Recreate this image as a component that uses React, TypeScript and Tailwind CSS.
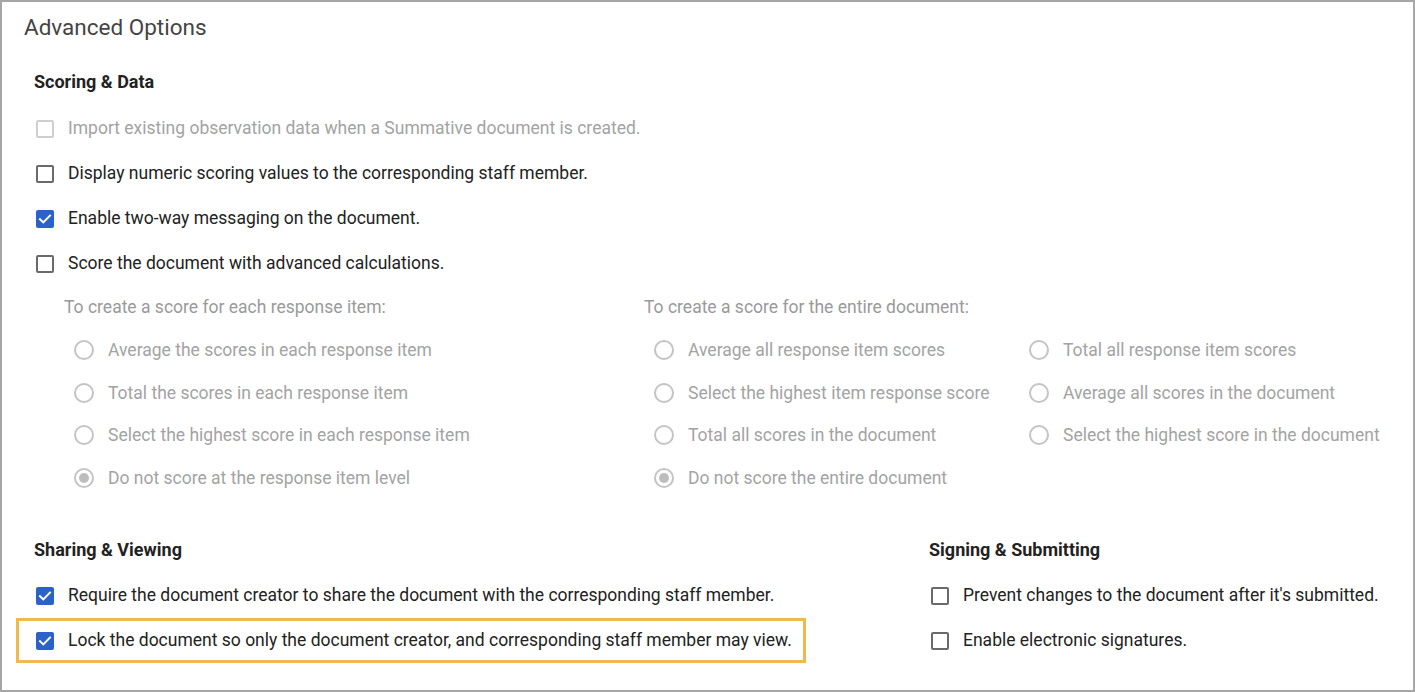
import type { ReactNode } from "react";

const font = { fontFamily: "Roboto, 'Noto Sans', sans-serif" };

function Checkbox({ checked = false, disabled = false }: { checked?: boolean; disabled?: boolean }) {
  if (checked) {
    return (
      <span className="flex h-[18px] w-[18px] shrink-0 items-center justify-center rounded-[2px] bg-[#2b62c8]">
        <svg viewBox="0 0 18 18" className="h-[18px] w-[18px]" fill="none">
          <path d="M4 9.2l3.3 3.2L14 5.6" stroke="white" strokeWidth="2" strokeLinecap="square" />
        </svg>
      </span>
    );
  }
  return (
    <span
      className={
        disabled
          ? "h-[18px] w-[18px] shrink-0 rounded-[2px] border-2 border-[#cfcfcf]"
          : "h-[18px] w-[18px] shrink-0 rounded-[2px] border-2 border-[#6a6a6a]"
      }
    />
  );
}

function CheckRow({ checked, disabled, children }: { checked?: boolean; disabled?: boolean; children: ReactNode }) {
  return (
    <div className="flex h-[45px] items-center gap-[14px]">
      <Checkbox checked={checked} disabled={disabled} />
      <span className={disabled ? "text-[17.5px] text-[#a3a3a3]" : "text-[17.5px] text-[#222222]"}>{children}</span>
    </div>
  );
}

function Radio({ selected = false, children }: { selected?: boolean; children: ReactNode }) {
  return (
    <div className="flex h-[42.5px] items-center gap-[14px]">
      <span className="flex h-[20px] w-[20px] shrink-0 items-center justify-center rounded-full border-2 border-[#c4c4c4]">
        {selected && <span className="h-[10px] w-[10px] rounded-full bg-[#bdbdbd]" />}
      </span>
      <span className="whitespace-nowrap text-[17.5px] text-[#a3a3a3]">{children}</span>
    </div>
  );
}

function SectionTitle({ children }: { children: ReactNode }) {
  return <h3 className="flex h-[24px] items-center text-[18px] font-bold text-[#222222]">{children}</h3>;
}

export default function App() {
  return (
    <div style={font} className="h-[692px] w-[1415px] border-2 border-[#a6a6a6] bg-white">
      <div className="flex h-[51px] items-center pl-[22px]">
        <h2 className="text-[22.5px] text-[#444444]">Advanced Options</h2>
      </div>

      <section className="pl-[32px]">
        <div className="mt-[16px]">
          <SectionTitle>Scoring &amp; Data</SectionTitle>
        </div>
        <div className="mt-[13px] pl-[2px]">
          <CheckRow disabled>Import existing observation data when a Summative document is created.</CheckRow>
          <CheckRow>Display numeric scoring values to the corresponding staff member.</CheckRow>
          <CheckRow checked>Enable two-way messaging on the document.</CheckRow>
          <CheckRow>Score the document with advanced calculations.</CheckRow>
        </div>

        <div className="flex pl-[30px]">
          <div className="w-[580px]">
            <p className="flex h-[43px] items-center text-[17.5px] text-[#9a9a9a]">To create a score for each response item:</p>
            <div className="pl-[10px]">
              <Radio>Average the scores in each response item</Radio>
              <Radio>Total the scores in each response item</Radio>
              <Radio>Select the highest score in each response item</Radio>
              <Radio selected>Do not score at the response item level</Radio>
            </div>
          </div>
          <div>
            <p className="flex h-[43px] items-center text-[17.5px] text-[#9a9a9a]">To create a score for the entire document:</p>
            <div className="grid grid-cols-[375px_auto] pl-[10px]">
              <Radio>Average all response item scores</Radio>
              <Radio>Total all response item scores</Radio>
              <Radio>Select the highest item response score</Radio>
              <Radio>Average all scores in the document</Radio>
              <Radio>Total all scores in the document</Radio>
              <Radio>Select the highest score in the document</Radio>
              <Radio selected>Do not score the entire document</Radio>
            </div>
          </div>
        </div>
      </section>

      <div className="mt-[38px] flex pl-[32px]">
        <section className="w-[895px]">
          <SectionTitle>Sharing &amp; Viewing</SectionTitle>
          <div className="mt-[12px] pl-[2px]">
            <CheckRow checked>Require the document creator to share the document with the corresponding staff member.</CheckRow>
            <div className="-ml-[20px] w-[790px] border-[3px] border-[#f0b94e] pl-[17px] [&>div]:h-[39px]">
              <CheckRow checked>Lock the document so only the document creator, and corresponding staff member may view.</CheckRow>
            </div>
          </div>
        </section>
        <section>
          <SectionTitle>Signing &amp; Submitting</SectionTitle>
          <div className="mt-[12px] pl-[2px]">
            <CheckRow>Prevent changes to the document after it's submitted.</CheckRow>
            <CheckRow>Enable electronic signatures.</CheckRow>
          </div>
        </section>
      </div>
    </div>
  );
}
